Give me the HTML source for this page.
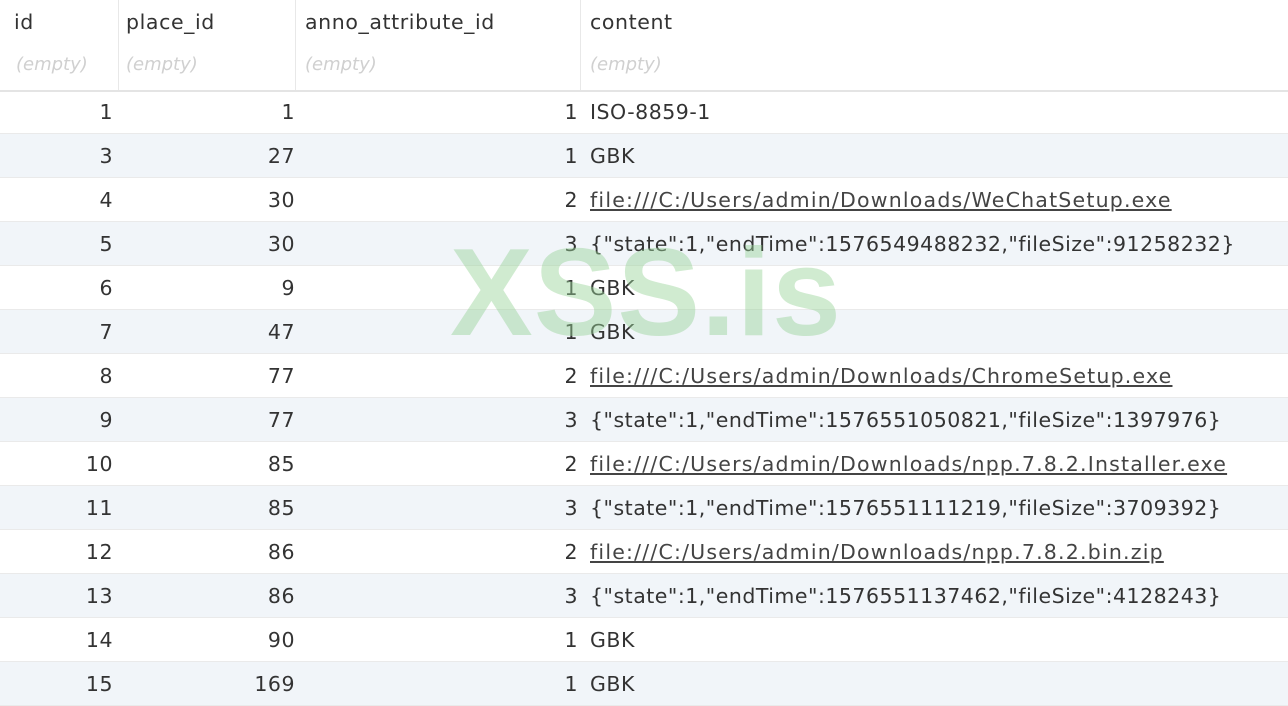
<!DOCTYPE html>
<html><head><meta charset="utf-8"><style>
body{margin:0;width:1288px;height:700px;overflow:hidden;background:#fff;font-family:"DejaVu Sans","Liberation Sans",sans-serif;color:#333;position:relative}
.hdr{position:absolute;left:0;top:0;width:1288px;height:90px;background:#fff;border-bottom:2px solid #e4e4e4}
.c{position:absolute;white-space:nowrap}
.h{font-size:20.5px;top:10px;letter-spacing:0.6px}
.e{font-size:18px;top:54px;color:#d0d0d0;font-style:italic}
.vl{position:absolute;top:0;height:90px;width:1px;background:#e8e8e8}
.row{position:absolute;left:0;width:1288px;height:44px;font-size:20.5px;line-height:44px;border-bottom:1px solid #eaeaea;box-sizing:border-box;letter-spacing:0.5px}
.alt{background:#f1f5f9}
.row span{position:absolute}
.a{right:1175px}.b{right:993px}.d{right:710px}.t{left:590px}
u{color:#444;letter-spacing:1.2px}
.wm{position:absolute;left:450px;top:222px;font-family:"Liberation Sans",sans-serif;font-size:124px;font-weight:bold;color:rgba(150,210,150,0.45);letter-spacing:1px}
</style></head><body>
<div class="hdr"></div>
<div class="vl" style="left:118px"></div><div class="vl" style="left:295px"></div><div class="vl" style="left:580px"></div>
<div class="c h" style="left:14px">id</div>
<div class="c h" style="left:126px">place_id</div>
<div class="c h" style="left:305px">anno_attribute_id</div>
<div class="c h" style="left:590px">content</div>
<div class="c e" style="left:16px">(empty)</div>
<div class="c e" style="left:126px">(empty)</div>
<div class="c e" style="left:305px">(empty)</div>
<div class="c e" style="left:590px">(empty)</div>

<div class="row" style="top:90px"><span class="a">1</span><span class="b">1</span><span class="d">1</span><span class="t">ISO-8859-1</span></div>
<div class="row alt" style="top:134px"><span class="a">3</span><span class="b">27</span><span class="d">1</span><span class="t">GBK</span></div>
<div class="row" style="top:178px"><span class="a">4</span><span class="b">30</span><span class="d">2</span><span class="t"><u>file:///C:/Users/admin/Downloads/WeChatSetup.exe</u></span></div>
<div class="row alt" style="top:222px"><span class="a">5</span><span class="b">30</span><span class="d">3</span><span class="t">{"state":1,"endTime":1576549488232,"fileSize":91258232}</span></div>
<div class="row" style="top:266px"><span class="a">6</span><span class="b">9</span><span class="d">1</span><span class="t">GBK</span></div>
<div class="row alt" style="top:310px"><span class="a">7</span><span class="b">47</span><span class="d">1</span><span class="t">GBK</span></div>
<div class="row" style="top:354px"><span class="a">8</span><span class="b">77</span><span class="d">2</span><span class="t"><u>file:///C:/Users/admin/Downloads/ChromeSetup.exe</u></span></div>
<div class="row alt" style="top:398px"><span class="a">9</span><span class="b">77</span><span class="d">3</span><span class="t">{"state":1,"endTime":1576551050821,"fileSize":1397976}</span></div>
<div class="row" style="top:442px"><span class="a">10</span><span class="b">85</span><span class="d">2</span><span class="t"><u>file:///C:/Users/admin/Downloads/npp.7.8.2.Installer.exe</u></span></div>
<div class="row alt" style="top:486px"><span class="a">11</span><span class="b">85</span><span class="d">3</span><span class="t">{"state":1,"endTime":1576551111219,"fileSize":3709392}</span></div>
<div class="row" style="top:530px"><span class="a">12</span><span class="b">86</span><span class="d">2</span><span class="t"><u>file:///C:/Users/admin/Downloads/npp.7.8.2.bin.zip</u></span></div>
<div class="row alt" style="top:574px"><span class="a">13</span><span class="b">86</span><span class="d">3</span><span class="t">{"state":1,"endTime":1576551137462,"fileSize":4128243}</span></div>
<div class="row" style="top:618px"><span class="a">14</span><span class="b">90</span><span class="d">1</span><span class="t">GBK</span></div>
<div class="row alt" style="top:662px"><span class="a">15</span><span class="b">169</span><span class="d">1</span><span class="t">GBK</span></div>
<div class="wm">XSS.is</div>
</body></html>
